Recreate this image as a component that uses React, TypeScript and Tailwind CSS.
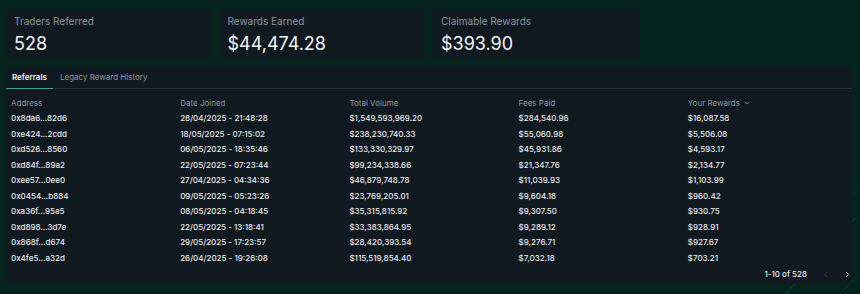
import React from "react";

const rows = [
  ["0x8da6...82d6", "28/04/2025 - 21:48:28", "$1,549,593,969.20", "$284,540.96", "$16,087.58"],
  ["0xe424...2cdd", "18/05/2025 - 07:15:02", "$238,230,740.33", "$55,060.98", "$5,506.08"],
  ["0xd526...8560", "06/05/2025 - 18:35:46", "$133,330,329.97", "$45,931.86", "$4,593.17"],
  ["0xd84f...89a2", "22/05/2025 - 07:23:44", "$99,234,338.66", "$21,347.76", "$2,134.77"],
  ["0xee57...0ee0", "27/04/2025 - 04:34:36", "$46,879,748.78", "$11,039.93", "$1,103.99"],
  ["0x0454...b884", "09/05/2025 - 05:23:26", "$23,769,205.01", "$9,604.18", "$960.42"],
  ["0xa36f...95a5", "08/05/2025 - 04:18:45", "$35,315,815.92", "$9,307.50", "$930.75"],
  ["0xd898...3d7e", "22/05/2025 - 13:18:41", "$33,383,864.95", "$9,289.12", "$928.91"],
  ["0x868f...d674", "29/05/2025 - 17:23:57", "$28,420,393.54", "$9,276.71", "$927.67"],
  ["0x4fe5...a32d", "26/04/2025 - 19:26:08", "$115,519,854.40", "$7,032.18", "$703.21"],
];

const cards = [
  ["Traders Referred", "528"],
  ["Rewards Earned", "$44,474.28"],
  ["Claimable Rewards", "$393.90"],
];

export default function App() {
  return (
    <div className="relative w-[860px] h-[294px] overflow-hidden bg-[#03221b] pl-[6px] pr-[8px] pt-[9px] font-['Inter',sans-serif]">
      <svg className="absolute inset-0 pointer-events-none" width="860" height="294">
        <line x1="780" y1="300" x2="900" y2="170" stroke="#0f4a38" strokeWidth="1" opacity="0.7" />
        <line x1="840" y1="294" x2="900" y2="230" stroke="#0f4a38" strokeWidth="1" opacity="0.6" />
        <line x1="853" y1="195" x2="900" y2="140" stroke="#0f4a38" strokeWidth="1" opacity="0.5" />
      </svg>
      <div className="relative grid grid-cols-4 gap-2">
        {cards.map(([label, value]) => (
          <div key={label} className="h-[50px] rounded-[5px] bg-[#111920] px-2 pt-[6px]">
            <div className="text-[10px] leading-[13px] text-[#8d949c]">{label}</div>
            <div className="mt-[5px] text-[18px] leading-[22px] text-[#f3f4f6]">{value}</div>
          </div>
        ))}
      </div>
      <div className="relative mt-[7px] h-[218px] rounded-[5px] bg-[#111920]">
        <div className="flex h-[23px] border-b border-[#272d35]">
          <div className="relative flex items-center px-[6px] text-[8px] font-semibold text-[#f3f4f6]">
            Referrals
            <div className="absolute bottom-[-1px] left-0 right-0 h-[1.5px] bg-[#3aa38f]" />
          </div>
          <div className="ml-[1px] flex items-center px-[6px] text-[8px] text-[#8d949c]">Legacy Reward History</div>
        </div>
        <div className="pt-[6px]">
          <div className="grid h-[15.5px] grid-cols-5 items-center text-[8px] text-[#8d949c]">
            <div className="px-[5px]">Address</div>
            <div className="px-[5px]">Date Joined</div>
            <div className="px-[5px]">Total Volume</div>
            <div className="px-[5px]">Fees Paid</div>
            <div className="flex items-center gap-[3px] px-[5px]">
              Your Rewards
              <svg width="8" height="8" viewBox="0 0 24 24" fill="none" stroke="#8d949c" strokeWidth="2.2" strokeLinecap="round" strokeLinejoin="round">
                <path d="m6 9 6 6 6-6" />
              </svg>
            </div>
          </div>
          {rows.map((r) => (
            <div key={r[0]} className="grid h-[15.5px] grid-cols-5 items-center text-[8px] font-medium text-[#e8eaed]">
              {r.map((c, i) => (
                <div key={i} className="px-[5px]">{c}</div>
              ))}
            </div>
          ))}
          <div className="flex h-[17px] items-center justify-end pr-0 text-[8px] font-medium text-[#e8eaed]">
            <span>1-10 of 528</span>
            <svg className="ml-[14px]" width="9" height="9" viewBox="0 0 24 24" fill="none" stroke="#3b4148" strokeWidth="2.2" strokeLinecap="round" strokeLinejoin="round">
              <path d="m15 18-6-6 6-6" />
            </svg>
            <svg className="ml-[13px]" width="9" height="9" viewBox="0 0 24 24" fill="none" stroke="#e8eaed" strokeWidth="2.2" strokeLinecap="round" strokeLinejoin="round">
              <path d="m9 18 6-6-6-6" />
            </svg>
          </div>
        </div>
      </div>
    </div>
  );
}
